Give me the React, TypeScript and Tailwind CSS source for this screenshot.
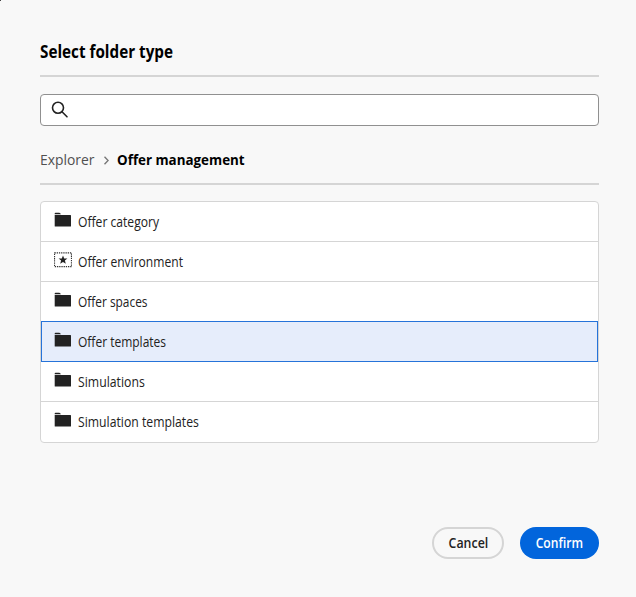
import React from "react";

type Item = { label: string; icon: "folder" | "offer"; width: string; selected?: boolean };

const items: Item[] = [
  { label: "Offer category", icon: "folder", width: "scale-x-[0.866]" },
  { label: "Offer environment", icon: "offer", width: "scale-x-[0.863]" },
  { label: "Offer spaces", icon: "folder", width: "scale-x-[0.85]" },
  { label: "Offer templates", icon: "folder", width: "scale-x-[0.857]", selected: true },
  { label: "Simulations", icon: "folder", width: "scale-x-[0.875]" },
  { label: "Simulation templates", icon: "folder", width: "scale-x-[0.873]" },
];

function FolderIcon() {
  return (
    <svg width="18" height="16" viewBox="0 0 18 16" fill="#222">
      <path d="M.7 2.2V1.5Q.7.7 1.5.7H5.2Q5.8.7 6.2 1.2L7 2.2Z" />
      <path d="M.7 3H16.5Q17 3 17 3.5V14Q17 14.5 16.5 14.5H1.2Q.7 14.5.7 14Z" />
    </svg>
  );
}

function OfferIcon() {
  return (
    <svg width="18" height="16" viewBox="0 0 18 16">
      <rect x=".5" y=".8" width="17" height="13.8" fill="none" stroke="#333" strokeWidth="1.2" strokeDasharray="1.3 0.9" />
      <path d="M9 3.4 10.2 6.5 13.4 6.6 10.9 8.6 11.8 11.8 9 10 6.2 11.8 7.1 8.6 4.6 6.6 7.8 6.5Z" fill="#222" />
    </svg>
  );
}

export default function App() {
  return (
    <main className="relative h-[597px] w-[636px] bg-[#f8f8f8] px-10 pt-[38px] font-['Open_Sans','Noto_Sans',sans-serif] text-[#222]">
      <span className="absolute top-0 left-0 size-px bg-[#444]" />
      <h1 className="h-[37px] text-[17px] leading-7 font-bold whitespace-nowrap text-black">
        <span className="inline-block origin-left scale-x-[0.897]">Select folder type</span>
      </h1>
      <div className="h-0.5 w-[559px] bg-[#d5d5d5]" />
      <div className="mt-[17px] flex h-8 w-[559px] items-center rounded-[4px] border border-[#909090] bg-white pl-[11px]">
        <svg className="-ml-px" width="18" height="18" viewBox="0 0 18 18" fill="none" stroke="#222" strokeWidth="1.6" strokeLinecap="round">
          <circle cx="7" cy="6.8" r="5.5" />
          <path d="m11 10.8 5 5" />
        </svg>
      </div>
      <nav className="mt-[19px] flex h-[38px] w-[559px] leading-7 whitespace-nowrap">
        <span className="w-16 text-[15px] text-[#505050]">
          <span className="inline-block origin-left scale-x-[0.925]">Explorer</span>
        </span>
        <svg className="mt-[11px] mr-2" width="5" height="9" viewBox="0 0 5 9" fill="none" stroke="#777" strokeWidth="1.4">
          <path d="m.5.8 3.6 3.7L.5 8.2" />
        </svg>
        <span className="text-[15px] font-bold text-black">
          <span className="inline-block origin-left scale-x-[0.892]">Offer management</span>
        </span>
      </nav>
      <div className="h-0.5 w-[559px] bg-[#d5d5d5]" />
      <ul className="mt-4 w-[559px] rounded-[4px] border border-[#d5d5d5] bg-white">
        {items.map((item, i) => (
          <li
            key={item.label}
            className={
              item.selected
                ? "-mt-px flex h-[41px] border border-[#2673d9] bg-[#e6edfb] pt-px pl-3"
                : i === 5
                  ? "flex h-10 pt-px pl-[13px]"
                  : "flex h-10 border-b border-[#d5d5d5] pt-px pl-[13px]"
            }
          >
            <span className="mt-[9px] mr-[6px] w-[18px] shrink-0">
              {item.icon === "folder" ? <FolderIcon /> : <OfferIcon />}
            </span>
            <span className={`${item.width} origin-left text-[14px] leading-[38px] whitespace-nowrap`}>{item.label}</span>
          </li>
        ))}
      </ul>
      <footer className="mt-[84px] flex w-[559px] justify-end gap-4 text-[14px] font-semibold">
        <button className="flex h-8 w-[72px] items-center justify-center rounded-full border-2 border-[#d5d5d5] leading-5">
          <span className="scale-x-[0.885]">Cancel</span>
        </button>
        <button className="flex h-8 w-[79px] items-center justify-center rounded-full bg-[#0265dc] leading-5 text-white">
          <span className="scale-x-[0.865]">Confirm</span>
        </button>
      </footer>
    </main>
  );
}
